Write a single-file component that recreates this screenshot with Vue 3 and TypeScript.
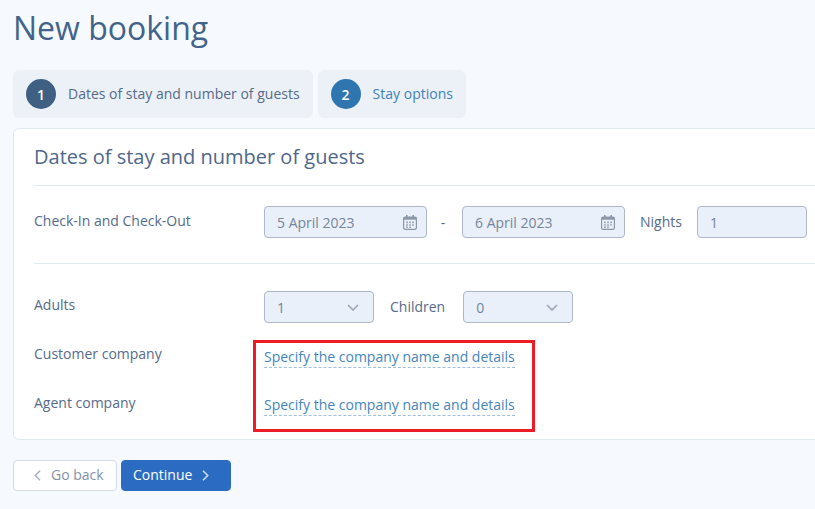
<script setup lang="ts">
const steps = [
  { num: 1, label: 'Dates of stay and number of guests', current: true },
  { num: 2, label: 'Stay options', current: false },
]
const dates = ['5 April 2023', '6 April 2023']
const companies = [
  { label: 'Customer company', cls: 'customer' },
  { label: 'Agent company', cls: 'agent' },
]
</script>

<template>
  <main class="page">
    <h1 class="title">New booking</h1>

    <div class="steps">
      <div v-for="s in steps" :key="s.num" :class="['step', { current: s.current }]">
        <span class="step-num">{{ s.num }}</span>
        <span class="step-label">{{ s.label }}</span>
      </div>
    </div>

    <section class="card">
      <h2 class="card-title">Dates of stay and number of guests</h2>

      <div class="row dates-row">
        <div class="label">Check-In and Check-Out</div>
        <div class="fields">
          <template v-for="(d, i) in dates" :key="d">
            <span v-if="i > 0" class="dash">-</span>
            <div class="input date">
              <span>{{ d }}</span>
              <svg class="cal" width="14" height="15" viewBox="0 0 14 15">
                <rect x="0.6" y="2.1" width="12.8" height="12.3" rx="1.6" fill="none" stroke="#8b97a9" stroke-width="1.2" />
                <rect x="0.6" y="2.1" width="12.8" height="2.6" fill="#8b97a9" />
                <rect x="3" y="0" width="1.6" height="3.2" fill="#8b97a9" />
                <rect x="9.4" y="0" width="1.6" height="3.2" fill="#8b97a9" />
                <path d="M3 6.6h2v1.6H3zM6 6.6h2v1.6H6zM9 6.6h2v1.6H9zM3 9.2h2v1.6H3zM6 9.2h2v1.6H6zM9 9.2h2v1.6H9zM3 11.6h2v1.4H3zM6 11.6h2v1.4H6z" fill="#a3adbc" />
              </svg>
            </div>
          </template>
          <span class="inline-label nights">Nights</span>
          <div class="input number">1</div>
        </div>
      </div>

      <div class="row guests-row">
        <div class="label">Adults</div>
        <div class="fields">
          <div class="input select">
            <span>1</span>
            <svg width="12" height="7" viewBox="0 0 12 7"><path d="M1 1l5 5 5-5" fill="none" stroke="#9aa5b5" stroke-width="1.6" /></svg>
          </div>
          <span class="inline-label children">Children</span>
          <div class="input select">
            <span>0</span>
            <svg width="12" height="7" viewBox="0 0 12 7"><path d="M1 1l5 5 5-5" fill="none" stroke="#9aa5b5" stroke-width="1.6" /></svg>
          </div>
        </div>
      </div>

      <div class="companies">
        <div v-for="c in companies" :key="c.cls" :class="['row', 'company', c.cls]">
          <div class="label">{{ c.label }}</div>
          <a class="link">Specify the company name and details</a>
        </div>
        <div class="highlight"></div>
      </div>
    </section>

    <div class="actions">
      <button class="btn back">
        <svg width="7" height="11" viewBox="0 0 7 11"><path d="M6 .8L1.3 5.5 6 10.2" fill="none" stroke="#a9b3c2" stroke-width="1.6" /></svg>
        <span>Go back</span>
      </button>
      <button class="btn next">
        <span>Continue</span>
        <svg width="7" height="11" viewBox="0 0 7 11"><path d="M1 .8l4.7 4.7L1 10.2" fill="none" stroke="#c9d9f0" stroke-width="1.6" /></svg>
      </button>
    </div>
  </main>
</template>

<style>
html,
body {
  margin: 0;
  background: #f6faff;
}
</style>

<style scoped>
.page {
  width: 815px;
  height: 509px;
  overflow: hidden;
  box-sizing: border-box;
  padding: 0 0 0 13px;
  font-family: 'Open Sans', 'Noto Sans', sans-serif;
  font-size: 14px;
  color: #566b89;
}

.title {
  margin: 0;
  height: 70px;
  padding-top: 6px;
  box-sizing: border-box;
  font-size: 32px;
  line-height: 44px;
  font-weight: 400;
  color: #43648a;
}

.steps {
  display: flex;
  gap: 5px;
}

.step {
  display: flex;
  align-items: center;
  gap: 12px;
  height: 48px;
  padding: 0 13px;
  border-radius: 6px;
  background: #ecf1f7;
  color: #3f82ba;
}

.step.current {
  color: #566b89;
}

.step-label {
  margin-top: -2px;
}

.step-num {
  width: 30px;
  height: 30px;
  border-radius: 50%;
  background: #2f75b0;
  color: #fff;
  font-weight: 600;
  display: flex;
  align-items: center;
  justify-content: center;
}

.step.current .step-num {
  background: #3f6083;
}

.card {
  width: 900px;
  height: 312px;
  box-sizing: border-box;
  margin-top: 10px;
  padding: 0 20px;
  background: #fff;
  border: 1px solid #dfe7f1;
  border-radius: 6px;
}

.card-title {
  margin: 0;
  height: 57px;
  box-sizing: border-box;
  padding-top: 13px;
  font-size: 20px;
  line-height: 30px;
  font-weight: 400;
  color: #4f6788;
  border-bottom: 1px solid #e3e9f2;
}

.row {
  display: flex;
}

.label {
  width: 230px;
  flex: none;
  line-height: 20px;
}

.fields {
  display: flex;
  align-items: center;
}

.dates-row {
  height: 78px;
  padding-top: 20px;
  box-sizing: border-box;
  border-bottom: 1px solid #e3e9f2;
}

.dates-row .label {
  padding-top: 5px;
}

.dates-row .fields {
  height: 32px;
}

.guests-row {
  margin-top: 27px;
}

.guests-row .label {
  padding-top: 4px;
}

.input {
  box-sizing: border-box;
  height: 32px;
  display: flex;
  align-items: center;
  justify-content: space-between;
  padding: 0 12px;
  background: #e9f0f9;
  border: 1px solid #aeb8c8;
  border-radius: 4px;
  color: #76859a;
}

.date {
  width: 163px;
  padding-right: 9px;
}

.dash {
  width: 35px;
  padding-right: 3px;
  box-sizing: border-box;
  text-align: center;
}

.number {
  width: 110px;
}

.select {
  width: 110px;
  padding-right: 14px;
}

.inline-label {
  line-height: 20px;
}

.nights {
  margin: 0 15px;
}

.children {
  margin: 0 18px 0 16px;
}

.companies {
  position: relative;
  margin-top: 21px;
}

.company {
  height: 49px;
}

.company .link {
  align-self: flex-start;
  margin-top: 3px;
  line-height: 20px;
  color: #4585bd;
  border-bottom: 1px dashed #9cc0de;
}

.company.agent .link {
  margin-top: 2px;
}

.highlight {
  position: absolute;
  left: 219px;
  top: -4px;
  width: 282px;
  height: 92px;
  box-sizing: border-box;
  border: 3px solid #ed1c24;
}

.actions {
  display: flex;
  gap: 4px;
  margin-top: 20px;
}

.btn {
  box-sizing: border-box;
  height: 31px;
  display: flex;
  align-items: center;
  justify-content: flex-start;
  font-family: inherit;
  font-size: 14px;
  border-radius: 4px;
  padding: 0;
}

.btn span {
  margin-top: -2px;
}

.back {
  width: 104px;
  gap: 10px;
  padding-left: 20px;
  background: #fff;
  border: 1px solid #d5dce6;
  color: #8492a6;
}

.next {
  width: 110px;
  gap: 10px;
  padding-left: 11px;
  background: #2b6cc2;
  border: 1px solid #2b6cc2;
  color: #fff;
  font-weight: 500;
}
</style>
